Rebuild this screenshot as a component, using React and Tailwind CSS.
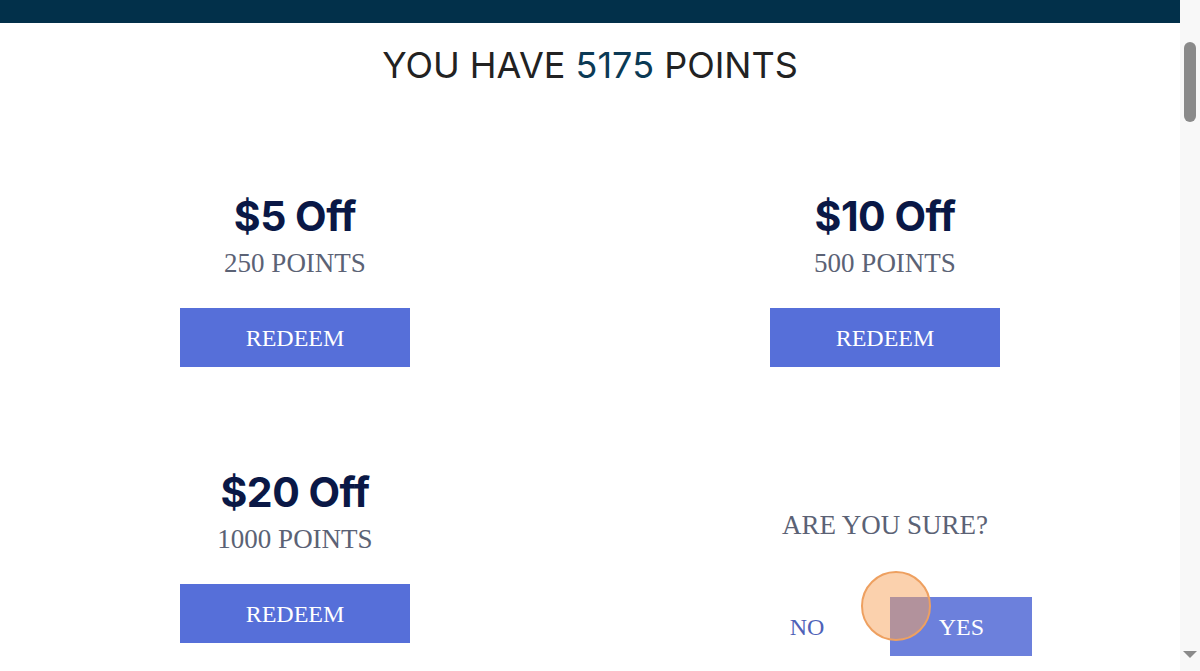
import React, { useState } from "react";

const rewards = [
  { id: 5, title: "$5 Off", points: 250 },
  { id: 10, title: "$10 Off", points: 500 },
  { id: 20, title: "$20 Off", points: 1000 },
];

function RewardCard({ reward, confirming, onRedeem, onCancel }) {
  if (confirming) {
    return (
      <div className="flex flex-col items-center pt-[39px]">
        <p className="font-['Liberation_Serif',serif] text-[27px] leading-[32px] text-[#5b6275]">
          ARE YOU SURE?
        </p>
        <div className="relative flex items-center mt-[56px] ml-[52px]">
          <button
            type="button"
            onClick={onCancel}
            className="font-['Liberation_Serif',serif] text-[24px] text-[#4f62b8] mr-[66px]"
          >
            NO
          </button>
          <button
            type="button"
            className="w-[142px] h-[59px] bg-[#6c80dc] text-white font-['Liberation_Serif',serif] text-[24px]"
          >
            YES
          </button>
          {/* click indicator */}
          <span className="absolute left-[71px] top-[-26px] w-[70px] h-[70px] rounded-full bg-[#f7a35c]/50 border-2 border-[#eea060]" />
        </div>
      </div>
    );
  }
  return (
    <div className="flex flex-col items-center">
      <h2 className="font-['Inter',sans-serif] font-bold text-[41px] leading-[44px] text-[#0a1846] tracking-[-0.5px]">
        {reward.title}
      </h2>
      <p className="font-['Liberation_Serif',serif] text-[27px] leading-[32px] text-[#5b6275] mt-[9px]">
        {reward.points} POINTS
      </p>
      <button
        type="button"
        onClick={onRedeem}
        className="mt-[29px] w-[230px] h-[59px] bg-[#566fd9] text-white font-['Liberation_Serif',serif] text-[24px]"
      >
        REDEEM
      </button>
    </div>
  );
}

export default function App() {
  const [confirmId, setConfirmId] = useState("last");

  return (
    <div className="w-[1200px] h-[671px] overflow-hidden flex bg-white">
      <div className="w-[1180px] flex flex-col">
        <div className="h-[23px] shrink-0 bg-[#02304a]" />
        <h1 className="shrink-0 text-center font-['Inter',sans-serif] text-[36px] leading-[44px] text-[#222] mt-[20px]">
          YOU HAVE <span className="text-[#0b3a55]">5175</span> POINTS
        </h1>
        <div className="shrink-0 grid grid-cols-2 gap-y-[103px] mt-[107px]">
          {rewards.map((r) => (
            <RewardCard
              key={r.id}
              reward={r}
              confirming={false}
              onRedeem={() => setConfirmId(r.id)}
            />
          ))}
          <RewardCard
            reward={{ id: 50, title: "$50 Off", points: 2500 }}
            confirming={confirmId === "last"}
            onCancel={() => setConfirmId(null)}
          />
        </div>
      </div>
      {/* scrollbar */}
      <div className="w-[20px] bg-[#f8f8f8] flex flex-col items-center justify-between pt-[42px] pb-[13px]">
        <div className="w-[12px] h-[80px] rounded-full bg-[#8a8a8a]" />
        <div className="w-0 h-0 border-l-[7px] border-r-[7px] border-t-[7px] border-l-transparent border-r-transparent border-t-[#8a8a8a]" />
      </div>
    </div>
  );
}
